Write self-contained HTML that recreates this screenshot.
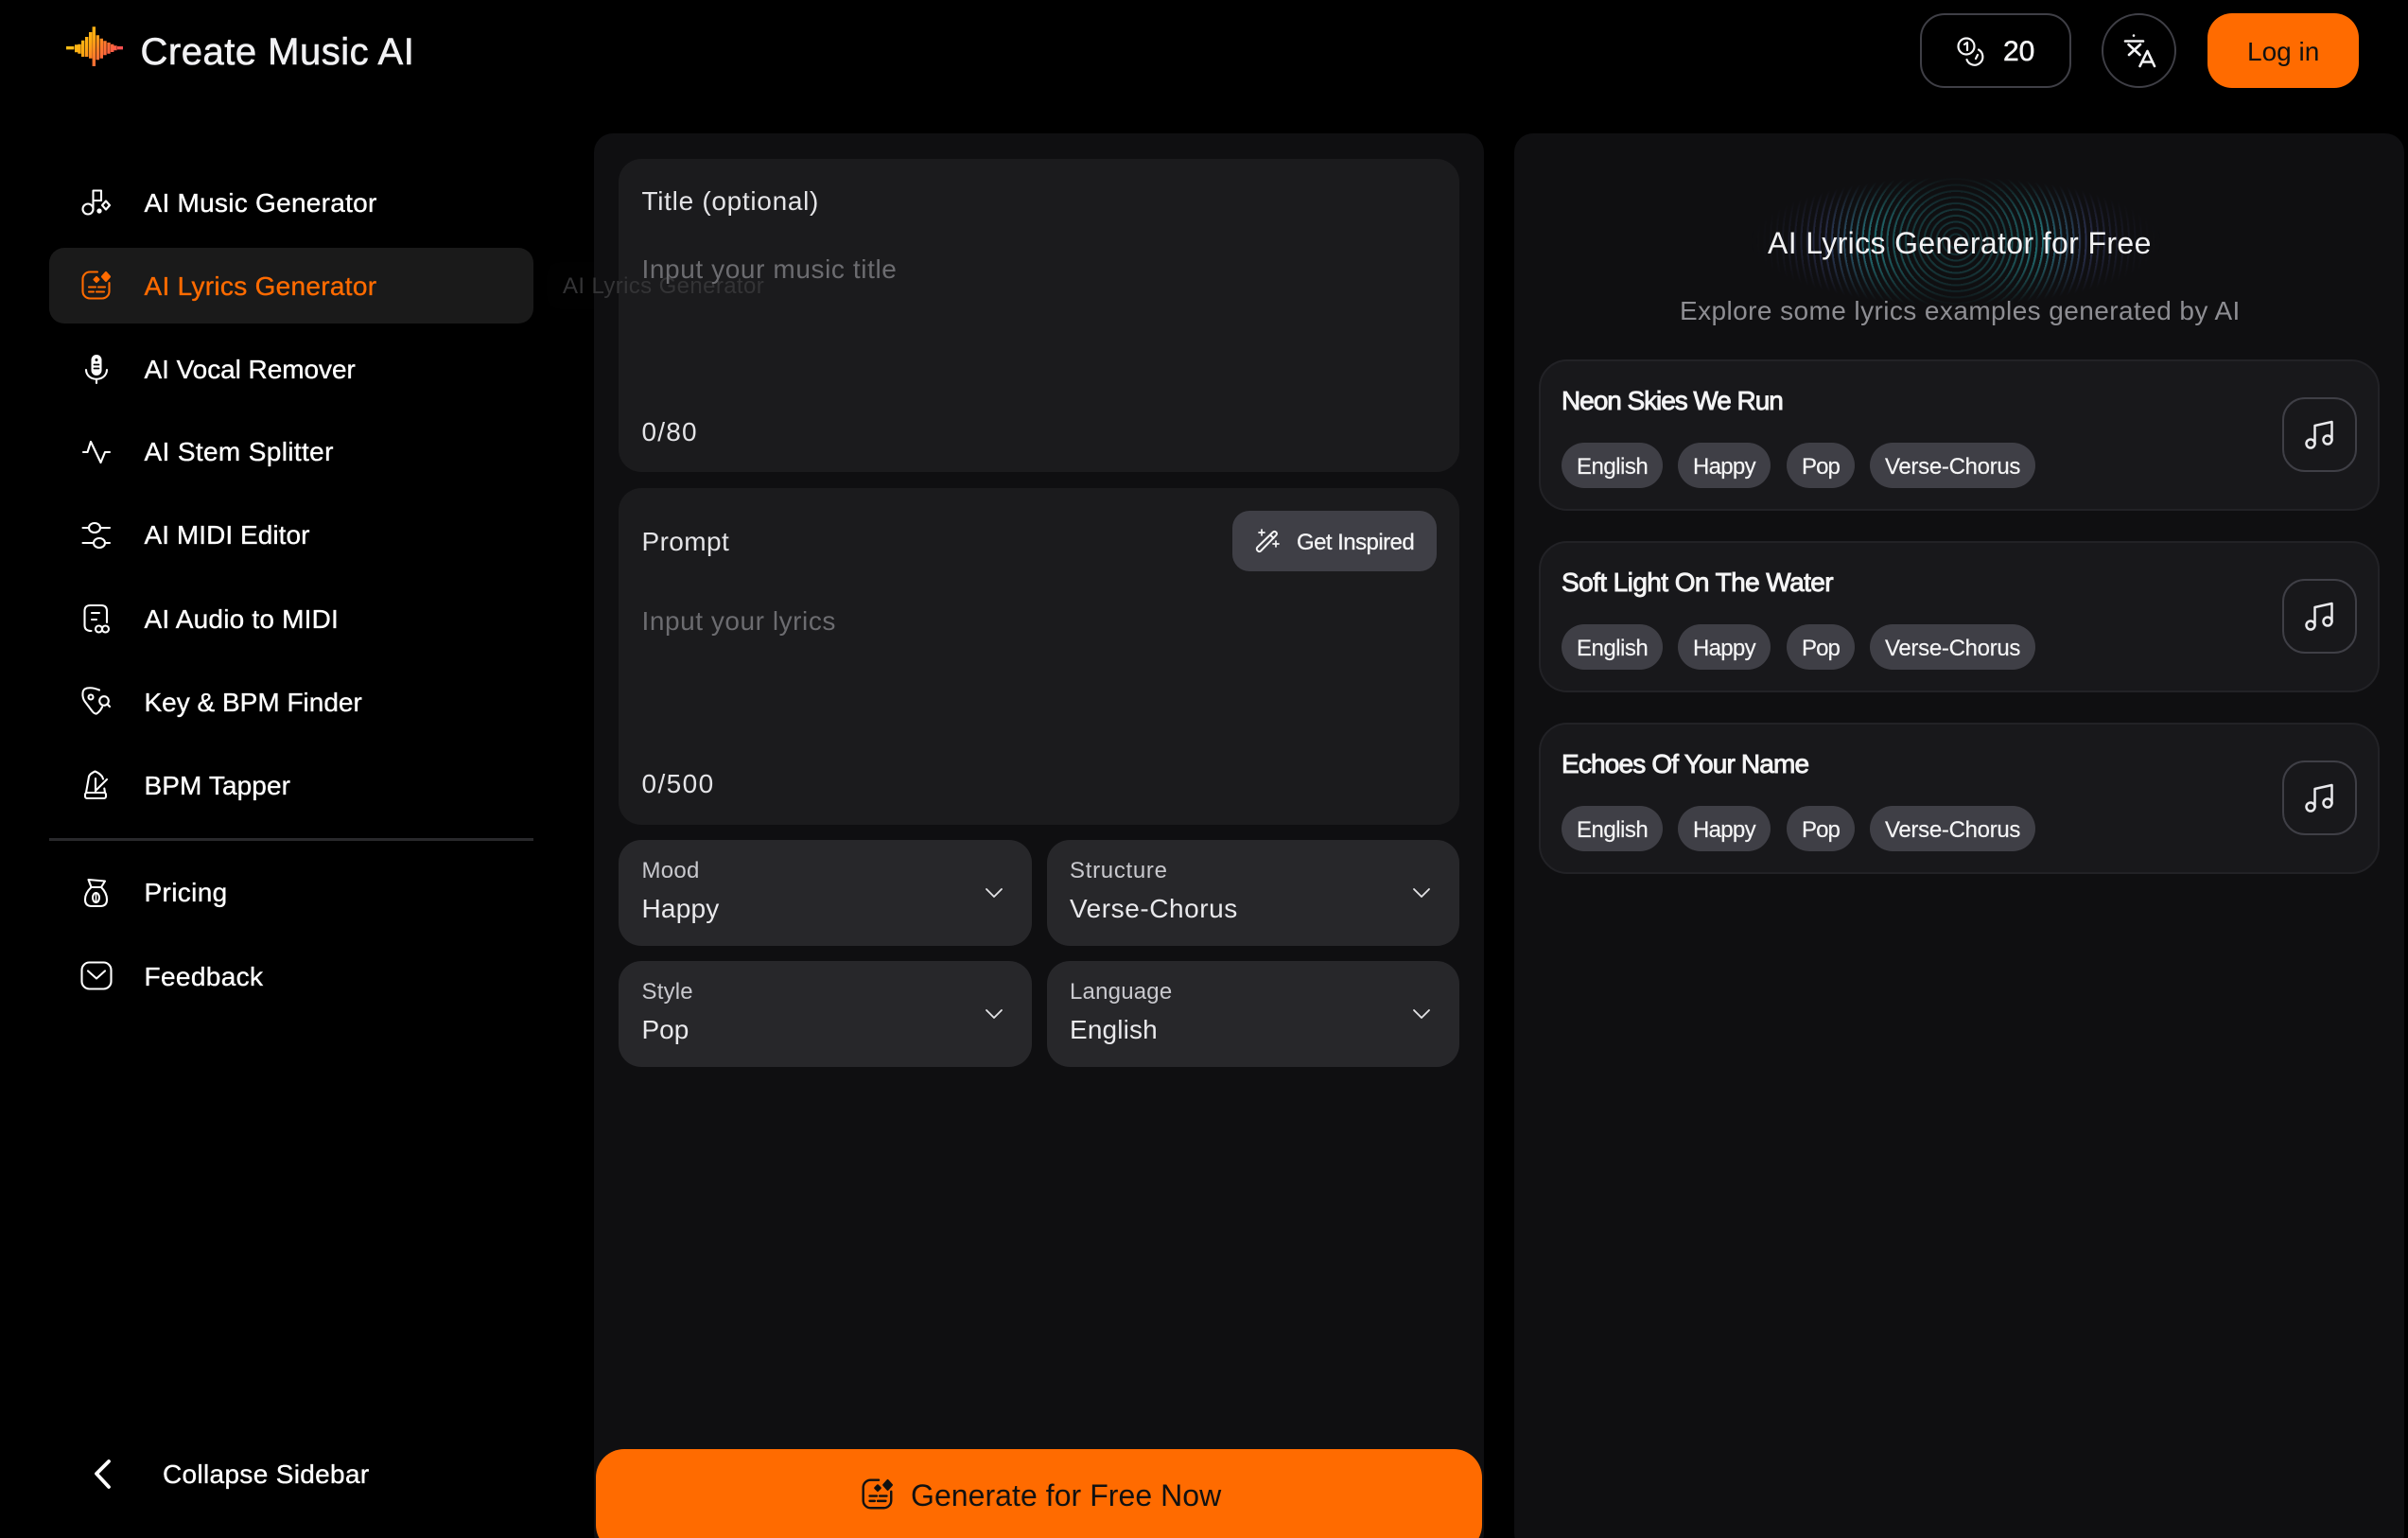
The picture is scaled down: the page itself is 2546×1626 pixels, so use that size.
<!DOCTYPE html>
<html lang="en"><head><meta charset="utf-8"><title>Create Music AI - AI Lyrics Generator</title>
<style>
*{box-sizing:border-box;margin:0;padding:0}
html,body{width:2546px;height:1626px;background:#000;overflow:hidden}
body{position:relative;font-family:"Liberation Sans",Arial,sans-serif;color:#fff}
.t{position:absolute;white-space:nowrap;line-height:40px;height:40px;font-size:28px;margin-top:.5px}
.b{position:absolute}
svg{position:absolute;overflow:visible;fill:none;stroke:currentColor;stroke-linecap:round;stroke-linejoin:round}
.nav{color:#fff;left:152.500px;-webkit-text-stroke:.35px currentColor}
.ic{left:84px;width:36px;height:36px;stroke-width:2.1;color:#fff}
.box{background:#1b1b1d;border-radius:24px}
.sel{background:#27272a;border-radius:24px}
.lbl{color:#e4e4e7}
.ph{color:#6c6c70}
.sl{font-size:24px;color:#c9c9ce;margin-top:1.5px}
.sv{color:#e9e9ec}
.chev{width:20px;height:12px;stroke-width:1.8;color:#e4e4e7}
.card{left:1627px;width:889px;height:160px;background:#18181b;border:2px solid #222226;border-radius:30px}
.ct{left:1651px;color:#f4f4f5;-webkit-text-stroke:.9px currentColor}
.tag{height:48px;background:#3f3f46;border-radius:24px}
.tt{font-size:24px;color:#f4f4f5;margin-top:1.5px;-webkit-text-stroke:.2px currentColor}
.mb{left:2412.500px;width:79px;height:79px;border:2px solid #3f3f46;border-radius:24px}
.note{left:2434.500px;width:36px;height:36px;stroke-width:2.5;color:#e9e9ec}
</style></head>
<body>
<svg width="0" height="0" style="position:absolute"><defs>
<linearGradient id="lg" gradientUnits="userSpaceOnUse" x1="72" y1="30" x2="126" y2="68"><stop offset="0" stop-color="#ffcf1a"/><stop offset=".42" stop-color="#ffa812"/><stop offset=".6" stop-color="#ff7a2a"/><stop offset="1" stop-color="#ff3d62"/></linearGradient>
</defs></svg>

<header>
<svg style="left:0;top:0;stroke:url(#lg);stroke-width:3.4;stroke-linecap:butt" width="200" height="90">
<path d="M70 50.700h5M76.700 49v3.400M80.700 47.300v8M84 46.700v10M87.700 42.700v17.300M91.700 39v21M95.700 34v27.700M99.300 28.300v41.700M103.300 37.300v26M107.300 40.700v21M111 43.300v15M115 45v11.700M118.700 46.700v8.300M122 48.300v5M124 50.700h6"/>
</svg>
<div class="t" style="left:148.500px;top:34px;font-size:40px;letter-spacing:.5px;color:#f1f1f3;line-height:40px;-webkit-text-stroke:.6px #f1f1f3">Create Music AI</div>

<div class="b" style="left:2030px;top:14px;width:160px;height:79px;border:2px solid #3f3f46;border-radius:26px"></div>
<svg style="left:2066px;top:35px;color:#f4f4f5" width="38" height="38" stroke-width="2.2">
<circle cx="13" cy="14" r="8.500"/><path d="M11 12l3-2v8"/>
<path d="M26 17.500a8.700 8.700 0 1 1-12.500 10.500"/><path d="M25 23l-2 4"/>
</svg>
<div class="t" style="left:2118px;top:34px;font-size:30px;color:#f4f4f5;-webkit-text-stroke:.5px #f4f4f5">20</div>

<div class="b" style="left:2222px;top:14px;width:79px;height:79px;border:2px solid #3f3f46;border-radius:50%"></div>
<svg style="left:2240px;top:32px;color:#f4f4f5" width="44" height="44" stroke-width="2.6">
<path d="M7 11.500h19M16 5.500v.1M10.500 15l12 11M23 15l-12 11"/>
<path d="M22.500 38L30.500 22l7.500 16M25 33.500h10.500"/>
</svg>

<div class="b" style="left:2334px;top:14px;width:160px;height:79px;background:#ff6b00;border-radius:26px"></div>
<div class="t" style="left:2376px;top:34px;color:#111">Log in</div>
</header>

<aside>
<div class="b" style="left:52px;top:262px;width:512px;height:80px;background:#1a1a1a;border-radius:16px"></div>

<svg class="ic" style="top:196px" viewBox="0 0 36 36"><circle cx="9" cy="25" r="5.500"/><path d="M14.500 25V5.500H23V16H15"/><path d="M28 16.500l4 4.500-4 4.500-4-4.500z"/><circle cx="21" cy="27" r="1.600" fill="currentColor"/></svg>
<div class="t nav" style="top:194px;letter-spacing:.27px">AI Music Generator</div>

<svg class="ic" style="top:284px;color:#ff6b00" viewBox="0 0 36 36"><path d="M19 3.500H11a7.500 7.500 0 0 0-7.500 7.500V24a7.500 7.500 0 0 0 7.500 7.500h13a7.500 7.500 0 0 0 7.500-7.500V15"/><path d="M28 4l4 4.500-4 4.500-4-4.500z" fill="currentColor"/><path d="M18 9l2.500 2.500L18 14l-2.500-2.500z" fill="currentColor"/><path d="M10 19.500h7M20 19.500h7M10 24.500h5M18 24.500h8"/></svg>
<div class="t nav" style="top:282px;color:#ff6b00;letter-spacing:.3px">AI Lyrics Generator</div>

<svg class="ic" style="top:372px" viewBox="0 0 36 36"><rect x="12.500" y="3" width="11" height="22" rx="5.500" fill="#fff" stroke="none"/><path d="M7 19c.5 13 21.500 13 22 0M18 29.500V33"/><circle cx="18" cy="8.500" r="1.500" fill="#000" stroke="none"/><path d="M15.500 13.500h5M15.500 17.500h5" stroke="#000" stroke-width="1.800"/></svg>
<div class="t nav" style="top:370px;letter-spacing:-.05px">AI Vocal Remover</div>

<svg class="ic" style="top:459px" viewBox="0 0 36 36"><path d="M4 19h4.500L12 8l10.500 22L27 19h5"/></svg>
<div class="t nav" style="top:457px;letter-spacing:.36px">AI Stem Splitter</div>

<svg class="ic" style="top:547px" viewBox="0 0 36 36"><path d="M3.500 11H10M22 11H32M3.500 27H15M27 27H32"/><ellipse cx="16" cy="11" rx="6" ry="5"/><ellipse cx="21" cy="27" rx="6" ry="5"/></svg>
<div class="t nav" style="top:545px;letter-spacing:.05px">AI MIDI Editor</div>

<svg class="ic" style="top:636px" viewBox="0 0 36 36"><path d="M12.500 31Q5.500 31 5.500 25V10Q5.500 4 11.500 4H23Q29 4 29 10V22"/><path d="M13 12h8M13 19h5"/><circle cx="20.500" cy="29" r="3.500"/><circle cx="27.500" cy="29" r="3.500"/></svg>
<div class="t nav" style="top:634px;letter-spacing:.2px">AI Audio to MIDI</div>

<svg class="ic" style="top:724px" viewBox="0 0 36 36"><path d="M21 5.500Q14 2.500 8 3.500Q3.500 4.500 3.500 9Q3 14 6 18L14 28.500Q17 32 19.500 29.500Q22.500 27 24 23.500"/><circle cx="12" cy="13" r="2.500"/><circle cx="26" cy="17" r="4.800"/><path d="M29.500 20.500L32 23"/></svg>
<div class="t nav" style="top:722px">Key &amp; BPM Finder</div>

<svg class="ic" style="top:812px" viewBox="0 0 36 36"><rect x="6" y="26" width="22" height="6" rx="2"/><path d="M7 26L10 9Q11 6 16.500 3.500Q21.500 5.500 24 9L25 11.500M27 26l-.7-4.500"/><path d="M17 11V26M17 24L29 12"/></svg>
<div class="t nav" style="top:810px;letter-spacing:.1px">BPM Tapper</div>

<div class="b" style="left:52px;top:886px;width:512px;height:2.500px;background:#29292c"></div>

<svg class="ic" style="top:926px" viewBox="0 0 36 36"><path d="M9.500 4L27 5.500 23 12H12.500z"/><path d="M12.500 12Q6 18 6 25Q6 32 13 32H22Q29 32 29 25Q29 18 23 12"/><ellipse cx="17.500" cy="23" rx="3.500" ry="5"/><path d="M17.500 18v10" stroke-width="1.500"/></svg>
<div class="t nav" style="top:923px;letter-spacing:.35px">Pricing</div>

<svg class="ic" style="top:1014px" viewBox="0 0 36 36"><rect x="2.500" y="3.500" width="31" height="28" rx="8"/><path d="M9 12.500l9 8 9-8"/></svg>
<div class="t nav" style="top:1012px;letter-spacing:.37px">Feedback</div>

<svg style="left:0;top:1530px;color:#fff" width="140" height="60" stroke-width="3.800"><path d="M115 15L102 28l13 14" stroke-linecap="round"/></svg>
<div class="t nav" style="left:172px;top:1538px;letter-spacing:.33px">Collapse Sidebar</div>
</aside>

<main>
<div class="b" style="left:628px;top:141px;width:941px;height:1500px;background:#0f0f11;border-radius:20px"></div>

<section>
<div class="b box" style="left:654px;top:168px;width:889px;height:331px"></div>
<div class="t lbl" style="left:678.500px;top:192px;letter-spacing:.7px">Title (optional)</div>
<div class="b" style="left:578px;top:277px;width:245px;height:50px;border-radius:14px;background:rgba(255,255,255,.005)"></div>
<div class="t" style="left:595px;top:282px;font-size:24px;letter-spacing:.38px;color:#343436">AI Lyrics Generator</div>
<div class="t ph" style="left:678.500px;top:264px;letter-spacing:.6px">Input your music title</div>
<div class="t lbl" style="left:678.500px;top:436px;letter-spacing:1.2px">0/80</div>
</section>

<section>
<div class="b box" style="left:654px;top:516px;width:889px;height:356px"></div>
<div class="t lbl" style="left:678.500px;top:552px;letter-spacing:.4px">Prompt</div>
<div class="b" style="left:1303px;top:540px;width:216px;height:64px;background:#3f3f46;border-radius:18px"></div>
<svg style="left:1326px;top:556px;color:#f4f4f5" width="32" height="32" stroke-width="2"><path d="M3.500 22.500L20 6.500a2 2 0 0 1 3 0l.3.300a2 2 0 0 1 0 3L7 26.500a2 2 0 0 1-3 0l-.5-.5a2.500 2.500 0 0 1 0-3.500zM17 9.500l3.500 3.500"/><path d="M8 4v6M5 7h6M23 16v6M20 19h6" stroke-width="1.700"/></svg>
<div class="t" style="left:1371px;top:553px;font-size:24px;letter-spacing:-.55px;color:#f4f4f5;-webkit-text-stroke:.3px #f4f4f5">Get Inspired</div>
<div class="t ph" style="left:678.500px;top:636px;letter-spacing:.55px">Input your lyrics</div>
<div class="t lbl" style="left:678.500px;top:808px;letter-spacing:1.4px">0/500</div>
</section>

<section>
<div class="b sel" style="left:654px;top:888px;width:437px;height:112px"></div>
<div class="t sl" style="left:678.500px;top:899px;letter-spacing:.25px">Mood</div>
<div class="t sv" style="left:678.500px;top:940px;letter-spacing:.2px">Happy</div>
<svg class="chev" style="left:1041px;top:938px"><path d="M2 2l8 8 8-8"/></svg>

<div class="b sel" style="left:1107px;top:888px;width:436px;height:112px"></div>
<div class="t sl" style="left:1131px;top:899px;letter-spacing:.7px">Structure</div>
<div class="t sv" style="left:1131px;top:940px;letter-spacing:.55px">Verse-Chorus</div>
<svg class="chev" style="left:1493px;top:938px"><path d="M2 2l8 8 8-8"/></svg>

<div class="b sel" style="left:654px;top:1016px;width:437px;height:112px"></div>
<div class="t sl" style="left:678.500px;top:1027px;letter-spacing:.2px">Style</div>
<div class="t sv" style="left:678.500px;top:1068px">Pop</div>
<svg class="chev" style="left:1041px;top:1066px"><path d="M2 2l8 8 8-8"/></svg>

<div class="b sel" style="left:1107px;top:1016px;width:436px;height:112px"></div>
<div class="t sl" style="left:1131px;top:1027px;letter-spacing:.2px">Language</div>
<div class="t sv" style="left:1131px;top:1068px;letter-spacing:.15px">English</div>
<svg class="chev" style="left:1493px;top:1066px"><path d="M2 2l8 8 8-8"/></svg>
</section>

<div class="b" style="left:630px;top:1532px;width:937px;height:110px;background:#ff6b00;border-radius:30px"></div>
<svg style="left:909px;top:1561px;color:#111" width="38" height="38" viewBox="0 0 36 36" stroke-width="2.300"><path d="M19 3.500H11a7.500 7.500 0 0 0-7.500 7.500V24a7.500 7.500 0 0 0 7.500 7.500h13a7.500 7.500 0 0 0 7.500-7.500V15"/><path d="M28 4l4 4.500-4 4.500-4-4.500z" fill="currentColor"/><path d="M18 9l2.500 2.500L18 14l-2.500-2.500z" fill="currentColor"/><path d="M10 19.500h7M20 19.500h7M10 24.500h5M18 24.500h8"/></svg>
<div class="t" style="left:963px;top:1560.500px;font-size:32px;letter-spacing:.05px;color:#111">Generate for Free Now</div>
</main>

<section>
<div class="b" style="left:1601px;top:141px;width:941px;height:1500px;background:#0f0f11;border-radius:20px"></div>

<div class="b" style="left:1848px;top:187px;width:440px;height:136px;opacity:.75;-webkit-mask-image:radial-gradient(ellipse closest-side at center,#000 45%,transparent 100%);mask-image:radial-gradient(ellipse closest-side at center,#000 45%,transparent 100%)">
<div style="width:100%;height:100%;background:radial-gradient(circle 215px at center,rgba(30,100,105,.45) 0,rgba(35,120,125,.55) 22%,rgba(45,165,170,.85) 42%,rgba(80,90,160,.8) 65%,rgba(60,60,110,.25) 100%);-webkit-mask-image:repeating-radial-gradient(circle at center,#000 0,#000 1.4px,transparent 2.600px,transparent 6.500px);mask-image:repeating-radial-gradient(circle at center,#000 0,#000 1.4px,transparent 2.600px,transparent 6.500px)"></div>
</div>
<div class="t" style="left:1869px;top:236.500px;font-size:32px;letter-spacing:.37px;color:#f1f1f3">AI Lyrics Generator for Free</div>
<div class="t" style="left:1776px;top:308.500px;letter-spacing:.42px;color:#8e8e93">Explore some lyrics examples generated by AI</div>

<article>
<div class="b card" style="top:380px"></div>
<div class="t ct" style="top:403.500px;letter-spacing:-1.05px">Neon Skies We Run</div>
<div class="b tag" style="left:1651px;top:468px;width:107px"></div><div class="t tt" style="left:1667px;top:472px;letter-spacing:-.5px">English</div>
<div class="b tag" style="left:1774px;top:468px;width:98px"></div><div class="t tt" style="left:1790px;top:472px;letter-spacing:-.7px">Happy</div>
<div class="b tag" style="left:1889px;top:468px;width:72px"></div><div class="t tt" style="left:1905px;top:472px;letter-spacing:-.9px">Pop</div>
<div class="b tag" style="left:1977px;top:468px;width:175px"></div><div class="t tt" style="left:1993px;top:472px;letter-spacing:-.3px">Verse-Chorus</div>
<div class="b mb" style="top:420px"></div>
<svg class="note" style="top:441px" viewBox="0 0 36 36"><circle cx="8" cy="28" r="4.500"/><circle cx="26" cy="24" r="4.500"/><path d="M12.500 28V9L30.500 5V24"/></svg>
</article>

<article>
<div class="b card" style="top:571.700px"></div>
<div class="t ct" style="top:595.500px;letter-spacing:-.58px">Soft Light On The Water</div>
<div class="b tag" style="left:1651px;top:660px;width:107px"></div><div class="t tt" style="left:1667px;top:664px;letter-spacing:-.5px">English</div>
<div class="b tag" style="left:1774px;top:660px;width:98px"></div><div class="t tt" style="left:1790px;top:664px;letter-spacing:-.7px">Happy</div>
<div class="b tag" style="left:1889px;top:660px;width:72px"></div><div class="t tt" style="left:1905px;top:664px;letter-spacing:-.9px">Pop</div>
<div class="b tag" style="left:1977px;top:660px;width:175px"></div><div class="t tt" style="left:1993px;top:664px;letter-spacing:-.3px">Verse-Chorus</div>
<div class="b mb" style="top:612px"></div>
<svg class="note" style="top:633px" viewBox="0 0 36 36"><circle cx="8" cy="28" r="4.500"/><circle cx="26" cy="24" r="4.500"/><path d="M12.500 28V9L30.500 5V24"/></svg>
</article>

<article>
<div class="b card" style="top:764px"></div>
<div class="t ct" style="top:787.500px;letter-spacing:-.83px">Echoes Of Your Name</div>
<div class="b tag" style="left:1651px;top:852px;width:107px"></div><div class="t tt" style="left:1667px;top:856px;letter-spacing:-.5px">English</div>
<div class="b tag" style="left:1774px;top:852px;width:98px"></div><div class="t tt" style="left:1790px;top:856px;letter-spacing:-.7px">Happy</div>
<div class="b tag" style="left:1889px;top:852px;width:72px"></div><div class="t tt" style="left:1905px;top:856px;letter-spacing:-.9px">Pop</div>
<div class="b tag" style="left:1977px;top:852px;width:175px"></div><div class="t tt" style="left:1993px;top:856px;letter-spacing:-.3px">Verse-Chorus</div>
<div class="b mb" style="top:804px"></div>
<svg class="note" style="top:825px" viewBox="0 0 36 36"><circle cx="8" cy="28" r="4.500"/><circle cx="26" cy="24" r="4.500"/><path d="M12.500 28V9L30.500 5V24"/></svg>
</article>
</section>
</body></html>
